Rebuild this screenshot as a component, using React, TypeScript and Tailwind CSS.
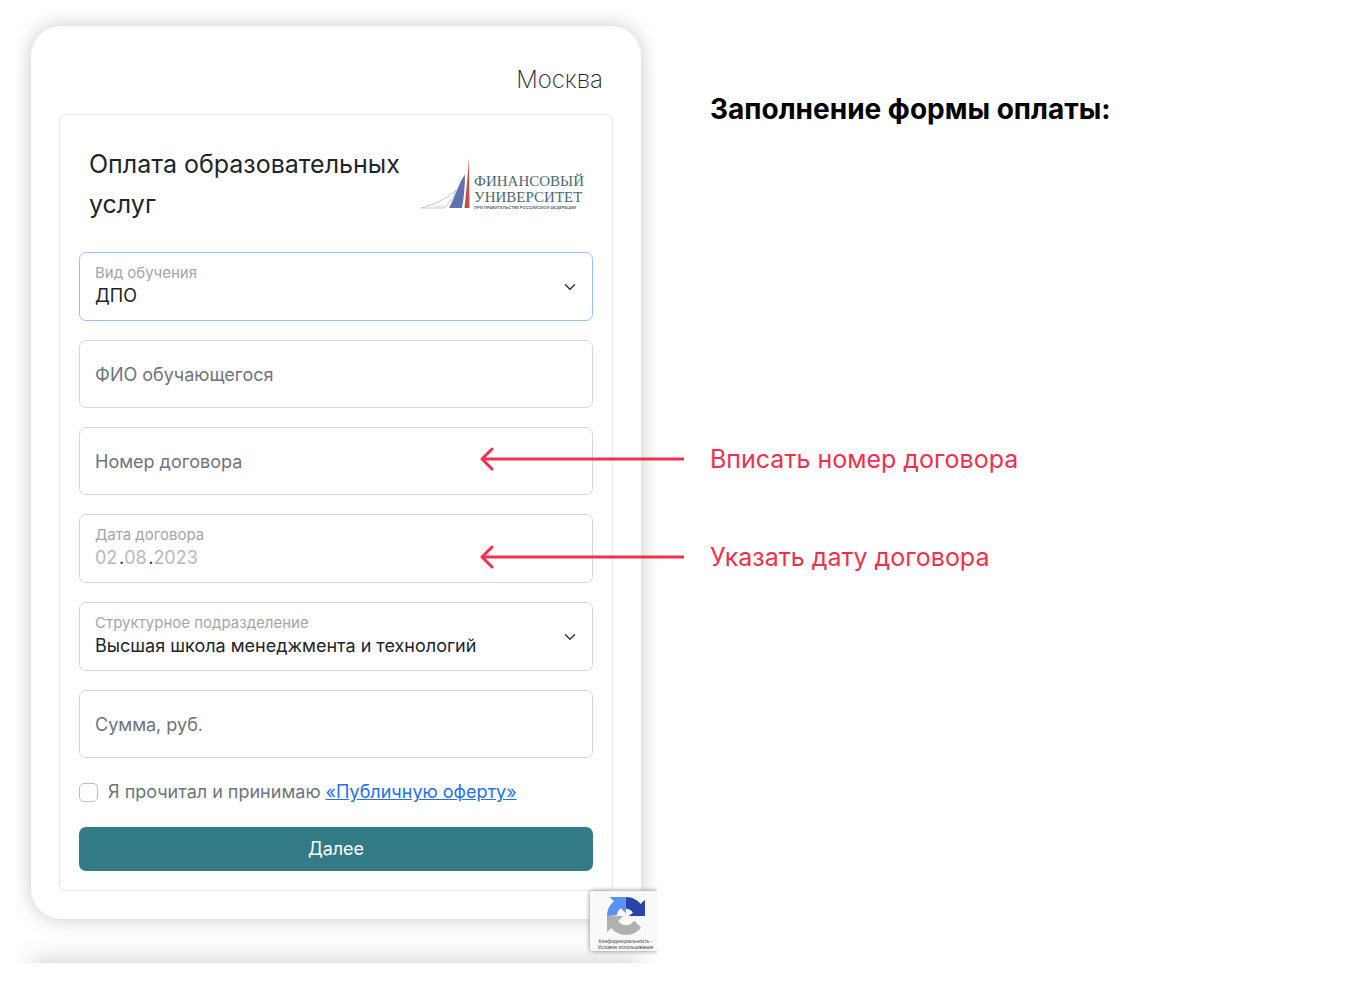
import React from 'react';

function UniversityLogo() {
  return (
    <div className="flex items-end gap-1 text-[#4d696c]">
      <svg viewBox="0 0 50 52" className="mb-[2px] h-[52px] w-[50px]" aria-hidden="true">
        <path d="M1 51C16 47 28 41 36 33C34 40 30 46 24 51Z" fill="none" stroke="#b9bcbc" strokeWidth="0.8" />
        <path d="M16 49H22" stroke="#c6c9c9" strokeWidth="1" strokeDasharray="1 0.600" />
        <path d="M29 51C35 41 38 27 45 17.500C45 29 44 40 42 51Z" fill="#5e72b0" />
        <path d="M49 0C48 18 46 36 44.500 51H49.500Z" fill="#c0524c" />
      </svg>
      <div>
        <p className="font-['Liberation_Serif',serif] text-[15px] leading-4 whitespace-nowrap">ФИНАНСОВЫЙ</p>
        <p className="font-['Liberation_Serif',serif] text-[15px] leading-4 whitespace-nowrap">УНИВЕРСИТЕТ</p>
        <p className="text-[4px] leading-[6px] font-semibold whitespace-nowrap">
          ПРИ ПРАВИТЕЛЬСТВЕ РОССИЙСКОЙ ФЕДЕРАЦИИ
        </p>
      </div>
    </div>
  );
}

type SelectFieldProps = {
  id: string;
  label: string;
  value: string;
  active?: boolean;
};

function SelectField({ id, label, value, active }: SelectFieldProps) {
  return (
    <div
      className={`relative flex h-[69px] flex-col gap-px rounded-[7px] border px-[15px] pt-[10px] ${
        active ? 'border-[#9dbff9]' : 'border-[#d5d9df]'
      }`}
    >
      <label htmlFor={id} className="text-[15px] leading-5 text-[#a3a6aa]">
        {label}
      </label>
      <select id={id} className="w-full appearance-none text-lg leading-6 text-[#212529] outline-none">
        <option>{value}</option>
      </select>
      <svg
        viewBox="0 0 16 16"
        className="pointer-events-none absolute top-1/2 right-4 size-3 -translate-y-1/2"
        fill="none"
        stroke="#343a40"
        strokeWidth="2"
        strokeLinecap="round"
        strokeLinejoin="round"
        aria-hidden="true"
      >
        <path d="M2 5l6 6 6-6" />
      </svg>
    </div>
  );
}

function TextField({ label }: { label: string }) {
  return (
    <input
      type="text"
      aria-label={label}
      placeholder={label}
      className="h-[68px] w-full rounded-[7px] border border-[#d5d9df] px-[15px] text-lg text-[#212529] outline-none placeholder:text-[#6c757d]"
    />
  );
}

function DateField() {
  return (
    <div className="flex h-[69px] flex-col gap-px rounded-[7px] border border-[#d5d9df] px-[15px] pt-[10px]">
      <label htmlFor="date-day" className="text-[15px] leading-5 text-[#a3a6aa]">
        Дата договора
      </label>
      <div className="flex text-lg leading-6 text-[#212529]">
        <input id="date-day" defaultValue="02" className="w-6 text-[#b3bac1] outline-none" />
        <span>.</span>
        <input aria-label="Месяц" defaultValue="08" className="w-6 text-[#b3bac1] outline-none" />
        <span>.</span>
        <input aria-label="Год" defaultValue="2023" className="w-12 text-[#b3bac1] outline-none" />
      </div>
    </div>
  );
}

function PaymentForm() {
  return (
    <form className="rounded-[7px] border border-[#e4e6ea] px-[19px] pb-[19px]">
      <div className="flex items-center justify-between pt-[29px] pr-[9px] pb-7 pl-[10px]">
        <h1 className="text-[25px] leading-10 text-[#212529]">
          Оплата образовательных
          <br />
          услуг
        </h1>
        <UniversityLogo />
      </div>

      <div className="flex flex-col gap-[19px]">
        <SelectField id="kind" label="Вид обучения" value="ДПО" active />
        <TextField label="ФИО обучающегося" />
        <TextField label="Номер договора" />
        <DateField />
        <SelectField
          id="department"
          label="Структурное подразделение"
          value="Высшая школа менеджмента и технологий"
        />
        <TextField label="Сумма, руб." />
      </div>

      <div className="mt-5 flex items-center gap-[10px] text-lg leading-7 text-[#6c757d]">
        <input
          id="offer"
          type="checkbox"
          className="size-[19px] appearance-none rounded-[5px] border border-[#bfbfbf] checked:bg-[#337a87]"
        />
        <label htmlFor="offer">
          Я прочитал и принимаю{' '}
          <a href="#offer" className="text-[#2371f5] underline">
            «Публичную оферту»
          </a>
        </label>
      </div>

      <button type="button" className="mt-[21px] h-11 w-full rounded-[7px] bg-[#337a87] text-lg text-white">
        Далее
      </button>
    </form>
  );
}

function RecaptchaBadge() {
  return (
    <div className="absolute right-0 bottom-3 flex h-[60px] w-[67px] flex-col items-center rounded-l-[3px] bg-[#f9f9f9] pt-[6px] pl-1 shadow-[0_0_5px_gray]">
      <svg viewBox="0 0 64 64" className="size-[38px]" aria-hidden="true">
        <path
          fill="#2844a8"
          d="M64 31.955l-.033-1.370V4.687l-7.160 7.160C50.948 4.674 42.033.093 32.050.093L31.860 19.200c4.976.393 9.288 3.140 11.828 7.124L36.500 32L64 31.953"
        />
        <path
          fill="#5a92f2"
          d="M31.862.094l-1.370.033H4.594l7.160 7.160C4.580 13.147 0 22.060 0 32.046L16.423 30.911c.393-4.976 3.140-9.288 7.124-11.828l8.307 8.307L31.860.095"
        />
        <path
          fill="#b0b0b0"
          d="M.001 32.045l.033 1.370v25.898l7.160-7.160c5.860 7.173 14.774 11.754 24.760 11.754 10.400 0 19.622-4.960 25.458-12.640l-11.736-11.860a15.550 15.550 0 0 1-4.754 5.334c-2.050 1.600-4.952 2.906-8.968 2.906-.485 0-.860-.057-1.135-.163-4.976-.393-9.288-3.140-11.828-7.124l8.307-8.307c-10.522.040-22.400.066-27.295-.005"
        />
      </svg>
      <p className="mt-[3px] text-center font-['Liberation_Sans',sans-serif] text-[5px] leading-[6px] whitespace-nowrap text-[#444]">
        Конфиденциальность -
        <br />
        Условия использования
      </p>
    </div>
  );
}

function Annotation({ text }: { text: string }) {
  return (
    <div className="relative">
      <svg
        viewBox="0 0 204 24"
        className="absolute top-1/2 right-full mr-[26px] h-6 w-[204px] -translate-y-1/2"
        fill="none"
        stroke="#f2304d"
        strokeWidth="3"
        aria-hidden="true"
      >
        <path d="M2 12H204" />
        <path d="M12 2L2 12L12 22" strokeLinecap="round" strokeLinejoin="round" />
      </svg>
      <p className="text-[25px] leading-8 text-[#f2304d]">{text}</p>
    </div>
  );
}

export default function App() {
  return (
    <main className="flex items-start bg-white pl-[15px] font-[Inter,sans-serif]">
      <section className="relative w-[642px] shrink overflow-hidden px-4 pt-[26px]">
        <div className="rounded-[30px] bg-white px-7 pt-[34px] pb-7 shadow-[0_0_20px_rgba(0,0,0,0.22)]">
          <p className="pr-[10px] pb-[14px] text-right text-2xl leading-10 font-extralight text-[#212529]">Москва</p>
          <PaymentForm />
        </div>
        {/* the next card starts below the fold, only its shadow is visible */}
        <div className="mt-11 -mb-20 h-20 shadow-[0_0_25px_rgba(0,0,0,0.22)]" />
        <RecaptchaBadge />
      </section>

      <section className="ml-[53px] flex-1 pt-[91px]">
        <h2 className="text-[28px] leading-9 font-bold text-black">Заполнение формы оплаты:</h2>
        <div className="mt-[316px] flex flex-col gap-[66px]">
          <Annotation text="Вписать номер договора" />
          <Annotation text="Указать дату договора" />
        </div>
      </section>
    </main>
  );
}
